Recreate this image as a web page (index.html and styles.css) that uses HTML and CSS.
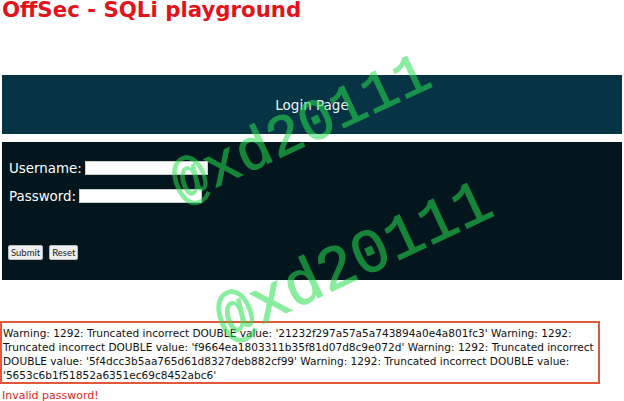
FILE: index.html
```html
<!DOCTYPE html>
<html>
<head>
<meta charset="utf-8">
<link rel="stylesheet" href="styles.css">
</head>
<body>
<h1 class="title">OffSec - SQLi playground</h1>
<div class="header">Login Page</div>
<form class="login">
  <div class="row"><label>Username:</label><input class="field" type="text"></div>
  <div class="row"><label>Password:</label><input class="field" type="password"></div>
  <div class="buttons"><button type="button">Submit</button><button type="button">Reset</button></div>
</form>
<div class="warning">Warning: 1292: Truncated incorrect DOUBLE value: '21232f297a57a5a743894a0e4a801fc3' Warning: 1292: Truncated incorrect DOUBLE value: 'f9664ea1803311b35f81d07d8c9e072d' Warning: 1292: Truncated incorrect DOUBLE value: '5f4dcc3b5aa765d61d8327deb882cf99' Warning: 1292: Truncated incorrect DOUBLE value: '5653c6b1f51852a6351ec69c8452abc6'</div>
<div class="invalid">Invalid password!</div>
<div class="wm wm1">@xd20111</div>
<div class="wm wm2">@xd20111</div>
</body>
</html>
```
FILE: styles.css
```css
html, body {
  margin: 0;
  padding: 0;
  background: #ffffff;
  font-family: "DejaVu Sans", sans-serif;
  overflow: hidden;
}
body {
  position: relative;
  width: 624px;
  height: 401px;
}
.title {
  margin: -3px 0 0 2px;
  font-size: 21.3px;
  line-height: 25px;
  font-weight: bold;
  color: #e3121b;
}
.header {
  margin: 53px 2px 0 2px;
  height: 59px;
  background: #063445;
  color: #eef4f4;
  font-size: 13.5px;
  display: flex;
  align-items: center;
  justify-content: center;
}
.login {
  margin: 8px 2px 0 2px;
  height: 138px;
  box-sizing: border-box;
  padding: 18px 7px 0 7px;
  background: #03161e;
  color: #ffffff;
  display: flex;
  flex-direction: column;
}
.row {
  display: flex;
  align-items: center;
  gap: 3px;
  height: 16px;
  margin-bottom: 12px;
  font-size: 13.4px;
}
.field {
  width: 123px;
  height: 14px;
  box-sizing: border-box;
  border: 1px solid #cccccc;
  background: #ffffff;
  padding: 0;
  margin: 0;
}
.buttons {
  margin-top: 29px;
  margin-left: -1px;
  display: flex;
  gap: 6px;
}
.buttons button {
  font-family: "Lato", sans-serif;
  font-size: 9.5px;
  height: 15px;
  padding: 0 2px;
  margin: 0;
  border: 1px solid #bbbbbb;
  border-radius: 2px;
  background: #efefef;
  color: #222;
}
.warning {
  margin-top: 41px;
  width: 600px;
  height: 63px;
  box-sizing: border-box;
  border: 2px solid #e2583a;
  padding: 3px 0 3px 1px;
  font-size: 10.55px;
  line-height: 14px;
  color: #111;
}
.invalid {
  margin: 5px 0 0 2px;
  font-size: 11px;
  line-height: 14px;
  color: #d9261c;
}
.wm {
  position: absolute;
  font-family: "Liberation Mono", monospace;
  font-size: 58px;
  color: rgb(40, 225, 80);
  -webkit-text-stroke: 1px rgb(40, 225, 80);
  opacity: 0.55;
  transform: rotate(-25deg);
  transform-origin: left bottom;
  white-space: nowrap;
  pointer-events: none;
  line-height: 1;
}
.wm1 { left: 188px; top: 158px; }
.wm2 { left: 233px; top: 292px; font-size: 62px; }
```
